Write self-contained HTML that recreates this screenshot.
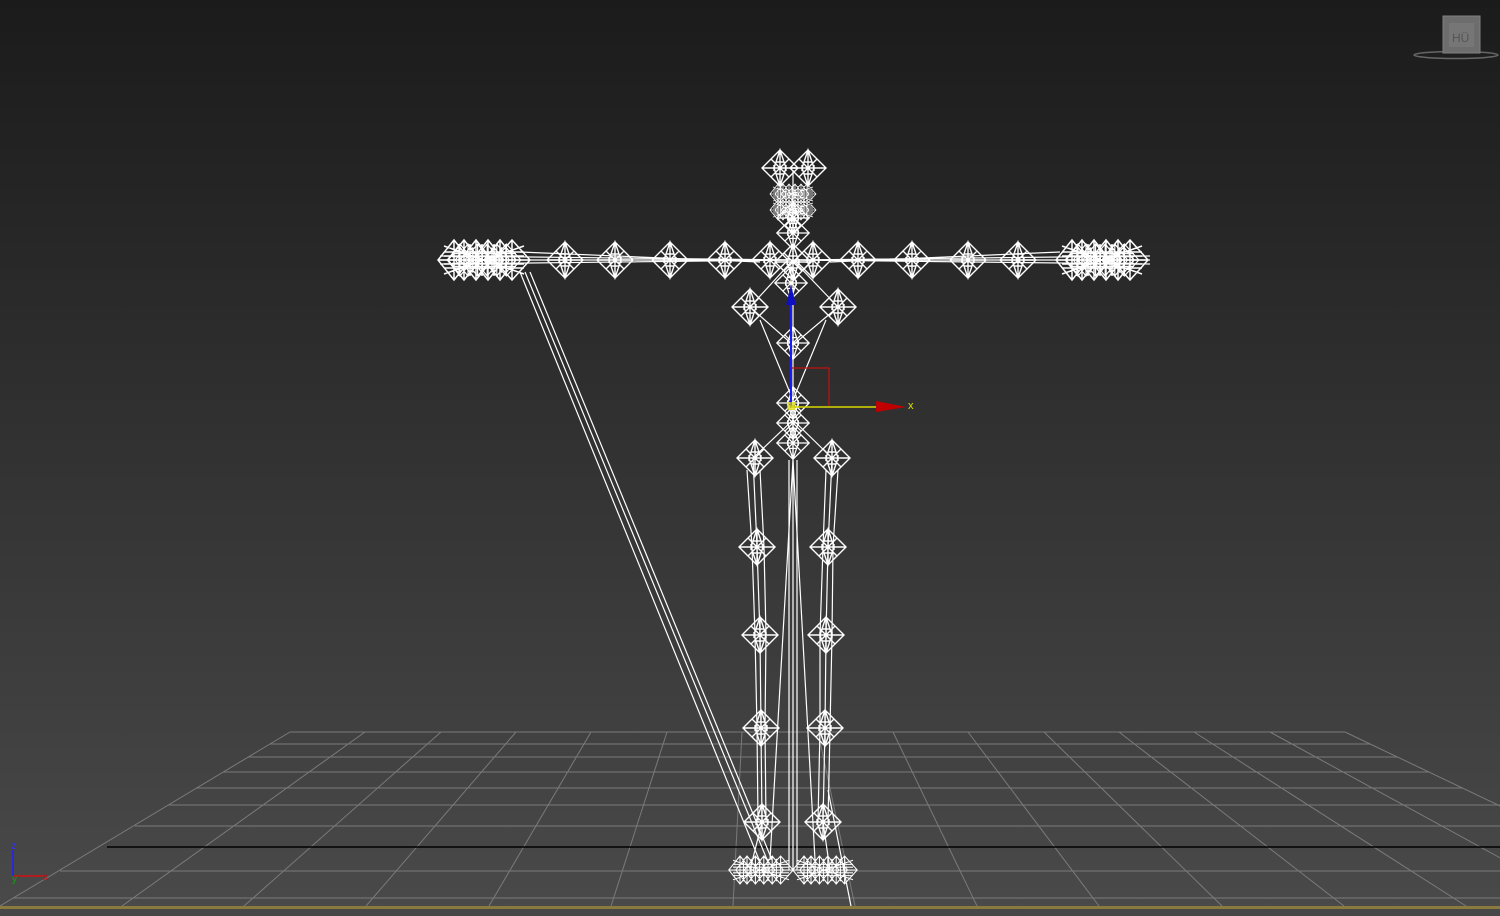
<!DOCTYPE html>
<html><head><meta charset="utf-8"><style>
html,body{margin:0;padding:0;width:1500px;height:916px;overflow:hidden;background:#2a2a2a}
svg{display:block}
</style></head><body>
<svg width="1500" height="916" viewBox="0 0 1500 916" xmlns="http://www.w3.org/2000/svg">
<defs>
<linearGradient id="bg" x1="0" y1="0" x2="0" y2="1">
<stop offset="0" stop-color="#1b1b1b"/><stop offset="0.45" stop-color="#303030"/><stop offset="1" stop-color="#4a4a4a"/>
</linearGradient>
<symbol id="d" viewBox="-20 -20 40 40" overflow="visible">
<path d="M0-18L18 0L0 18L-18 0Z M-18 0L18 0 M0-18L0 18 M-9-9L9 9 M9-9L-9 9 M-6 0L0-18L6 0L0 18Z M-4-6h8 M-4 6h8 M-6-3v6 M6-3v6" fill="none" stroke="#fff" stroke-width="1.4"/>
</symbol>
<symbol id="c" viewBox="-50 -22 100 44" overflow="visible">
<path d="M-46 0L-30-20L-14 0L-30 20Z M-36 0L-20-20L-4 0L-20 20Z M-24 0L-8-20L8 0L-8 20Z M-12 0L4-20L20 0L4 20Z M0 0L16-20L32 0L16 20Z M10 0L28-20L46 0L28 20Z M-46 0H46 M-40-8H40 M-40 8H40 M-40-4H40 M-40 4H40 M-30-20V20 M-25-16V16 M-20-20V20 M-14-16V16 M-8-20V20 M-2-16V16 M4-20V20 M10-16V16 M16-20V20 M22-16V16 M28-20V20 M-40-14L40 14 M-40 14L40-14" fill="none" stroke="#fff" stroke-width="1.5"/>
</symbol>
</defs>
<rect width="1500" height="916" fill="url(#bg)"/>
<!-- grid -->
<g stroke="#7a7a7a" stroke-width="1" fill="none">
<path d="M290 732H1345 M270 744H1370 M248 757H1398 M223 772H1429 M196 788H1463 M168 805H1500 M135 826H1500 M60 871H1500 M13 898H1500"/>
<path d="M290 732L0 906 M365 732L122 906 M441 732L244 906 M516 732L366 906 M591 732L489 906 M667 732L611 906 M742 732L733 906 M818 732L855 906 M893 732L977 906 M968 732L1099 906 M1044 732L1222 906 M1119 732L1344 906 M1194 732L1466 906 M1270 732L1588 906 M1345 732L1710 906"/>
</g>
<path d="M107 847H1500" stroke="#000" stroke-width="1.5"/>
<rect x="0" y="906" width="1500" height="3" fill="#8a7a3e"/>
<rect x="0" y="909" width="1500" height="7" fill="#474747"/>
<!-- skeleton lines -->
<g stroke="#fff" stroke-width="1.2" fill="none">
<path d="M440 260H1150 M440 256L1150 264 M440 264L1150 256 M520 252L760 262 M1060 252L830 262"/>
<path d="M520 272L760 862 M525 272L768 862 M530 272L772 860"/>
<path d="M793 170V460 M750 307L793 260L838 307 M750 307L793 345L838 307 M760 320L793 400L826 320"/>
<path d="M793 420L753 458 M793 420L832 458 M793 460V870 M789 460V870 M797 460V870"/>
<path d="M753 458L757 547L760 635L761 728L762 822L750 870 M747 470L752 547L755 635L757 728L758 822 M760 470L764 547L766 635L765 728L766 822"/>
<path d="M832 458L828 547L826 635L825 728L823 822L830 870 M838 470L833 547L832 635L830 728L828 822 M826 470L823 547L820 635L820 728L818 822"/>
<path d="M793 460L770 860 M793 460L815 860 M828 790L851 906"/>
</g>
<g>
<use href="#d" x="760" y="148" width="40" height="40"/>
<use href="#d" x="788" y="148" width="40" height="40"/>
<use href="#c" x="768" y="172" width="50" height="44"/>
<use href="#c" x="768" y="188" width="50" height="44"/>
<use href="#d" x="775" y="200" width="36" height="36"/>
<use href="#d" x="775" y="215" width="36" height="36"/>
<use href="#d" x="545" y="240" width="40" height="40"/>
<use href="#d" x="595" y="240" width="40" height="40"/>
<use href="#d" x="650" y="240" width="40" height="40"/>
<use href="#d" x="705" y="240" width="40" height="40"/>
<use href="#d" x="750" y="240" width="40" height="40"/>
<use href="#d" x="793" y="240" width="40" height="40"/>
<use href="#d" x="838" y="240" width="40" height="40"/>
<use href="#d" x="892" y="240" width="40" height="40"/>
<use href="#d" x="948" y="240" width="40" height="40"/>
<use href="#d" x="998" y="240" width="40" height="40"/>
<use href="#d" x="773" y="242" width="40" height="40"/>
<use href="#d" x="773" y="265" width="36" height="36"/>
<use href="#d" x="730" y="287" width="40" height="40"/>
<use href="#d" x="818" y="287" width="40" height="40"/>
<use href="#d" x="775" y="325" width="36" height="36"/>
<use href="#d" x="775" y="385" width="36" height="36"/>
<use href="#d" x="775" y="405" width="36" height="36"/>
<use href="#d" x="775" y="425" width="36" height="36"/>
<use href="#d" x="735" y="438" width="40" height="40"/>
<use href="#d" x="812" y="438" width="40" height="40"/>
<use href="#d" x="737" y="527" width="40" height="40"/>
<use href="#d" x="808" y="527" width="40" height="40"/>
<use href="#d" x="740" y="615" width="40" height="40"/>
<use href="#d" x="806" y="615" width="40" height="40"/>
<use href="#d" x="741" y="708" width="40" height="40"/>
<use href="#d" x="805" y="708" width="40" height="40"/>
<use href="#d" x="742" y="802" width="40" height="40"/>
<use href="#d" x="803" y="802" width="40" height="40"/>
<use href="#c" x="434" y="238" width="100" height="44"/>
<use href="#c" x="444" y="240" width="80" height="40"/>
<use href="#c" x="1052" y="238" width="100" height="44"/>
<use href="#c" x="1062" y="240" width="80" height="40"/>
<use href="#c" x="726" y="848" width="70" height="44"/>
<use href="#c" x="790" y="848" width="70" height="44"/>
</g>
<!-- gizmo -->
<path d="M791 405V300" stroke="#1a1aff" stroke-width="2"/>
<path d="M786 305L791 285L796 305Z" fill="#1010c0"/>
<path d="M791 368H829V406" stroke="#c01010" stroke-width="1.2" fill="none"/>
<path d="M791 368V406" stroke="#1a1aff" stroke-width="1.2"/>
<path d="M791 407H880" stroke="#d8d800" stroke-width="1.5"/>
<path d="M876 401L906 407L876 412Z" fill="#c00000"/>
<text x="908" y="409" font-family="Liberation Sans, sans-serif" font-size="11" fill="#e0e000">x</text>
<rect x="787" y="402" width="8" height="8" fill="#d8d800" opacity="0.7"/>
<!-- corner axis -->
<path d="M13 876V850" stroke="#2020ff" stroke-width="1.5"/>
<path d="M13 876H44" stroke="#d01010" stroke-width="1.5"/>
<text x="11" y="849" font-family="Liberation Sans, sans-serif" font-size="10" fill="#3030ff">z</text>
<text x="43" y="880" font-family="Liberation Sans, sans-serif" font-size="10" fill="#c01010">x</text>
<text x="12" y="882" font-family="Liberation Sans, sans-serif" font-size="10" fill="#10a010">y</text>
<!-- viewcube -->
<ellipse cx="1456" cy="55" rx="42" ry="3.5" fill="none" stroke="#666" stroke-width="1.5"/>
<rect x="1443" y="16" width="37" height="37" fill="#6d6d6d" stroke="#808080"/>
<rect x="1449" y="23" width="25" height="24" fill="#767676"/>
<text x="1452" y="42" font-family="Liberation Sans, sans-serif" font-size="12" fill="#555">HÜ</text>
</svg>
</body></html>
